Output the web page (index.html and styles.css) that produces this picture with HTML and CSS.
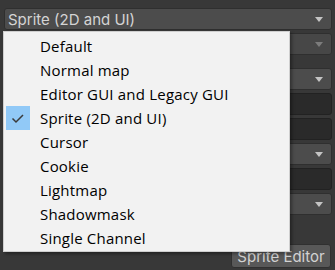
FILE: index.html
```html
<!DOCTYPE html>
<html lang="en">
<head>
    <meta charset="UTF-8">
    <title>Texture Type</title>
    <link rel="stylesheet" href="styles.css">
</head>
<body>
<div class="inspector">
    <div class="popup">
        <span class="popup-label">Sprite (2D and UI)</span>
        <span class="arrow"></span>
    </div>
    <div class="popup disabled"><span class="arrow"></span></div>
    <div class="popup gap-above"><span class="arrow"></span></div>
    <div class="field"></div>
    <div class="field"></div>
    <div class="popup"><span class="arrow"></span></div>
    <div class="field"></div>
    <div class="popup"><span class="arrow"></span></div>
    <div class="button-row">
        <button class="mini-button">Sprite Editor</button>
    </div>
</div>

<!-- Texture type menu, open over the inspector -->
<ul class="menu">
    <li>Default</li>
    <li>Normal map</li>
    <li>Editor GUI and Legacy GUI</li>
    <li class="checked">
        <span class="check">
            <svg width="24" height="24" viewBox="0 0 24 24">
                <polyline points="6.5,12.5 10,16 17,9" fill="none" stroke="#3a3a3a" stroke-width="1.5"/>
            </svg>
        </span>
        Sprite (2D and UI)
    </li>
    <li>Cursor</li>
    <li>Cookie</li>
    <li>Lightmap</li>
    <li>Shadowmask</li>
    <li>Single Channel</li>
</ul>
</body>
</html>
```

FILE: styles.css
```css
body {
    margin: 0;
    width: 335px;
    height: 270px;
    overflow: hidden;
    background-color: #383838;
    font-family: Inter, "Noto Sans", sans-serif;
    position: relative;
}
.inspector {
    display: flex;
    flex-direction: column;
    gap: 3px;
    padding: 8px 3px 0 4px;
}
.popup {
    position: relative;
    height: 22px;
    box-sizing: border-box;
    background: #4c4c4c;
    border: 1px solid #2f2f2f;
    border-radius: 3px;
    display: flex;
    align-items: center;
}
.popup.disabled {
    background: #474747;
}
.popup.gap-above {
    margin-top: 10px;
}
.popup-label {
    color: #d4d4d4;
    font-size: 15px;
    padding-left: 3px;
}
.arrow {
    position: absolute;
    right: 8px;
    top: 8px;
    width: 0;
    height: 0;
    border-left: 4px solid transparent;
    border-right: 4px solid transparent;
    border-top: 5px solid #c4c4c4;
}
.disabled .arrow {
    border-top-color: #7c7c7c;
}
.field {
    height: 22px;
    box-sizing: border-box;
    background: #2a2a2a;
    border: 1px solid #222;
    border-radius: 3px;
}
.button-row {
    display: flex;
    justify-content: flex-end;
    margin-top: 26px;
    padding-right: 1px;
}
.mini-button {
    width: 100px;
    height: 24px;
    background: #585858;
    color: #d2d2d2;
    border: 1px solid #303030;
    border-radius: 3px;
    font-family: Inter, "Noto Sans", sans-serif;
    font-size: 15px;
    padding: 0;
}
.menu {
    position: absolute;
    left: 3px;
    top: 31px;
    width: 287px;
    height: 221px;
    box-sizing: border-box;
    margin: 0;
    padding: 2px 0 0 0;
    list-style: none;
    background: #f2f2f2;
    border: 1px solid #cfcfcf;
    box-shadow: 2px 2px 3px rgba(0, 0, 0, 0.35);
    font-family: "Open Sans", "Noto Sans", sans-serif;
    font-size: 15px;
    letter-spacing: 0.2px;
    color: #000;
}
.menu li {
    position: relative;
    height: 24px;
    line-height: 24px;
    padding-left: 36px;
}
.check {
    position: absolute;
    left: 2px;
    top: 0;
    width: 24px;
    height: 24px;
    background: #91c9f7;
}
.check svg {
    display: block;
}
```
